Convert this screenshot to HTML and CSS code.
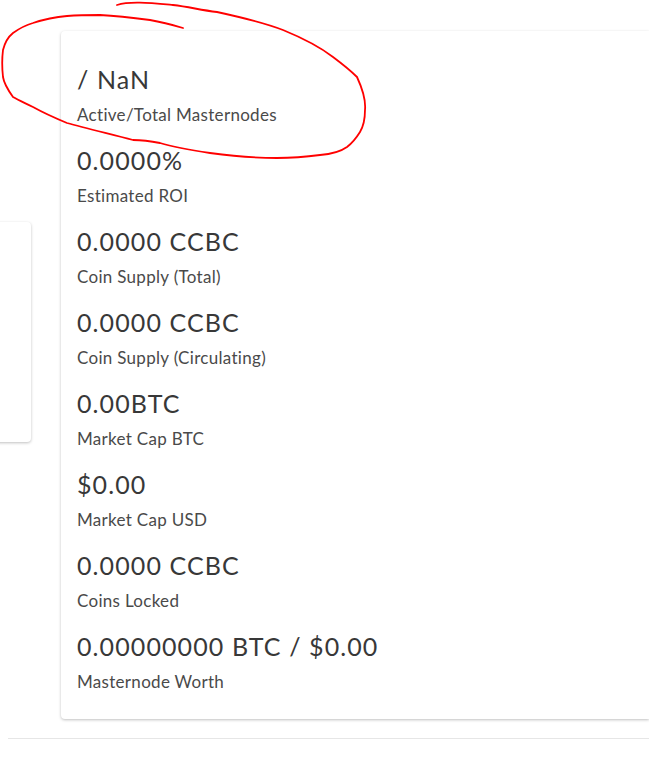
FILE: index.html
```html
<!DOCTYPE html>
<html>
<head>
<meta charset="utf-8">
<link rel="stylesheet" href="styles.css">
</head>
<body>
<div class="layout">
  <div class="side-card"></div>
  <div class="main-card">
    <div class="stat"><div class="value">/ NaN</div><div class="label">Active/Total Masternodes</div></div>
    <div class="stat"><div class="value">0.0000%</div><div class="label">Estimated ROI</div></div>
    <div class="stat"><div class="value">0.0000 CCBC</div><div class="label">Coin Supply (Total)</div></div>
    <div class="stat"><div class="value">0.0000 CCBC</div><div class="label">Coin Supply (Circulating)</div></div>
    <div class="stat"><div class="value">0.00BTC</div><div class="label">Market Cap BTC</div></div>
    <div class="stat"><div class="value">$0.00</div><div class="label">Market Cap USD</div></div>
    <div class="stat"><div class="value">0.0000 CCBC</div><div class="label">Coins Locked</div></div>
    <div class="stat"><div class="value">0.00000000 BTC / $0.00</div><div class="label">Masternode Worth</div></div>
  </div>
</div>
<hr class="rule">
<svg class="annotation" width="380" height="170" viewBox="0 0 380 170">
  <path d="M117,5 C130,1 150,3 173,5 C190,7 200,10 217,12 C240,17 262,22 283,30 C305,39 320,47 333,57 C345,66 352,72 357,77 C363,90 366,100 365,110 C365,120 363,127 360,132 C355,140 351,144 347,147 C340,152 333,154 320,155 C305,157 290,158 277,158 C255,158 232,156 210,153 C190,150 170,146 160,143 C150,141 140,140 133,140 C110,134 85,128 67,123 C55,118 42,112 33,107 C25,103 18,100 13,97 C8,90 4,84 3,77 C2,68 2,58 3,50 C5,42 8,37 13,33 C20,28 26,25 33,23 C45,19 55,17 67,16 C80,15 90,15 100,15 C120,16 135,18 150,20 C162,22 173,25 183,28" fill="none" stroke="#f00" stroke-width="1.8" stroke-linecap="round" stroke-linejoin="round"/>
</svg>
</body>
</html>
```
FILE: styles.css
```css
html {
  overflow: hidden;
}
body {
  margin: 0;
  padding: 8px;
  background: #fff;
  font-family: Lato, "Open Sans", sans-serif;
  color: #333;
  position: relative;
}
.layout {
  display: flex;
  align-items: flex-start;
  gap: 30px;
  margin-top: 23px;
  margin-right: -8px;
}
.side-card {
  flex: none;
  width: 200px;
  height: 220px;
  margin-left: -177px;
  margin-top: 191px;
  background: #fff;
  border-radius: 4px;
  box-shadow: 0 1px 3px rgba(0,0,0,0.25);
}
.main-card {
  flex: 1;
  min-width: 0;
  background: #fff;
  border-radius: 4px 0 0 4px;
  box-shadow: 0 1px 3px rgba(0,0,0,0.25);
  padding: 33px 16px 7px;
  box-sizing: border-box;
}
.stat {
  height: 81px;
}
.value {
  font-size: 25px;
  line-height: 30px;
  letter-spacing: 1.1px;
  color: #383838;
}
.label {
  font-size: 17px;
  line-height: 24px;
  letter-spacing: 0.3px;
  margin-top: 9px;
  color: #4a4a4a;
}
.rule {
  border: 0;
  border-top: 1px solid #e6e6e6;
  margin: 19px -8px 0 0;
}
.annotation {
  position: absolute;
  left: 0;
  top: 0;
  pointer-events: none;
}
```
